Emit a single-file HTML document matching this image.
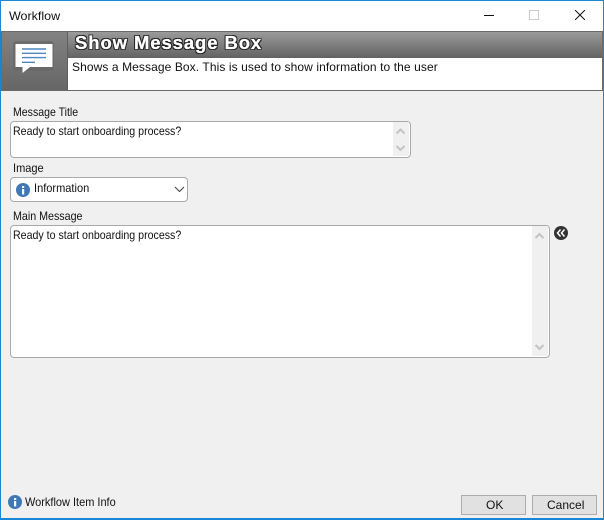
<!DOCTYPE html>
<html><head><meta charset="utf-8"><style>
html,body{margin:0;padding:0}
body{width:604px;height:520px;position:relative;overflow:hidden;background:#f0f0f0;font-family:"Liberation Sans",sans-serif;font-size:12px;color:#111}
div,svg{position:absolute;box-sizing:border-box}
.t{white-space:nowrap;line-height:14px;transform-origin:0 50%}
.box{background:#fff;border:1px solid #a9a9a9;border-radius:4px}
</style></head><body>
<div style="left:0;top:0;width:604px;height:31px;background:#fff"></div>
<div class="t" style="left:9px;top:9px;transform:scaleX(1.04)">Workflow</div>
<div style="left:484px;top:15px;width:10px;height:1px;background:#111"></div>
<div style="left:529px;top:10px;width:10px;height:10px;border:1px solid #ccc"></div>
<svg style="left:575px;top:10px" width="10" height="10" viewBox="0 0 10 10"><path d="M0 0L10 10M10 0L0 10" stroke="#111" stroke-width="1" fill="none"/></svg>

<div style="left:1px;top:31px;width:602px;height:60px;background:#fff;border:1px solid #6a6a6a"></div>
<div style="left:2px;top:32px;width:66px;height:58px;background:linear-gradient(#828282,#666)"></div>
<div style="left:67px;top:32px;width:1px;height:58px;background:#5e5e5e"></div>
<div style="left:68px;top:32px;width:534px;height:26px;background:linear-gradient(#9a9a9a,#626262)"></div>
<svg style="left:13px;top:41px" width="42" height="34" viewBox="0 0 42 34"><rect x="0" y="0" width="41" height="30" rx="3" fill="#666" opacity=".7"/><path d="M2.5 3H39.5V26H17L9.5 32V26H2.5Z" fill="#fff"/><path d="M9 8H33M9 12.3H33M9 16.6H33M9 21.3H22" stroke="#4f86c0" stroke-width="1.4"/></svg>
<div class="t" style="left:75px;top:34px;font-size:18.5px;line-height:18px;font-weight:bold;color:#fff;letter-spacing:.9px;-webkit-text-stroke:.3px #fff;text-shadow:-1px 0 #222,1px 0 #222,0 -1px #222,0 1px #222,-1px -1px #222,1px 1px #222,-1px 1px #222,1px -1px #222">Show Message Box</div>
<div class="t" style="left:72px;top:60px;letter-spacing:.09px">Shows a Message Box. This is used to show information to the user</div>

<div class="t" style="left:13px;top:105px;transform:scaleX(.88)">Message Title</div>
<div class="box" style="left:10px;top:121px;width:401px;height:37px"></div>
<div style="left:393px;top:122px;width:16px;height:34px;background:#f0f0f0"></div>
<svg style="left:393px;top:122px" width="17" height="35" viewBox="0 0 17 35"><path d="M3.5 11.5L7.5 7.5L11.5 11.5M3.5 24L7.5 28L11.5 24" stroke="#c4c4c4" stroke-width="2" fill="none"/></svg>
<div class="t" style="left:13px;top:124px;transform:scaleX(.885)">Ready to start onboarding process?</div>

<div class="t" style="left:13px;top:161px;transform:scaleX(.92)">Image</div>
<div class="box" style="left:10px;top:177px;width:178px;height:25px"></div>
<svg style="left:16px;top:183px" width="14" height="14" viewBox="0 0 14 14"><circle cx="7" cy="7" r="7" fill="#3f78b5"/><rect x="6" y="6" width="2.2" height="5.5" fill="#fff"/><rect x="6" y="3" width="2.2" height="2" fill="#fff"/></svg>
<div class="t" style="left:34px;top:181px;transform:scaleX(.92)">Information</div>
<svg style="left:174px;top:186px" width="11" height="7" viewBox="0 0 11 7"><path d="M1 1L5.5 5.5L10 1" stroke="#444" stroke-width="1.1" fill="none"/></svg>

<div class="t" style="left:13px;top:209px;transform:scaleX(.89)">Main Message</div>
<div class="box" style="left:10px;top:225px;width:540px;height:133px"></div>
<div style="left:532px;top:226px;width:16px;height:130px;background:#f0f0f0"></div>
<svg style="left:532px;top:226px" width="17" height="131" viewBox="0 0 17 131"><path d="M3.5 12L7.5 8L11.5 12M3.5 119L7.5 123L11.5 119" stroke="#c4c4c4" stroke-width="2" fill="none"/></svg>
<div class="t" style="left:13px;top:228px;transform:scaleX(.885)">Ready to start onboarding process?</div>
<svg style="left:554px;top:226px" width="14" height="14" viewBox="0 0 14 14"><circle cx="7" cy="7" r="7" fill="#333"/><path d="M6.5 3.5L3.5 7L6.5 10.5M10.5 3.5L7.5 7L10.5 10.5" stroke="#fff" stroke-width="1.5" fill="none"/></svg>

<svg style="left:8px;top:495px" width="14" height="14" viewBox="0 0 14 14"><circle cx="7" cy="7" r="7" fill="#3f78b5"/><rect x="6" y="6" width="2.2" height="5.5" fill="#fff"/><rect x="6" y="3" width="2.2" height="2" fill="#fff"/></svg>
<div class="t" style="left:25px;top:495px;transform:scaleX(.915)">Workflow Item Info</div>
<div style="left:461px;top:495px;width:65px;height:20px;background:#e1e1e1;border:1px solid #adadad"></div>
<div class="t" style="left:486px;top:498px">OK</div>
<div style="left:532px;top:495px;width:65px;height:20px;background:#e1e1e1;border:1px solid #adadad"></div>
<div class="t" style="left:547px;top:498px">Cancel</div>

<div style="left:0;top:0;width:604px;height:520px;border:1px solid #1a86d8;border-width:1px 1px 2px 1px"></div>
</body></html>
